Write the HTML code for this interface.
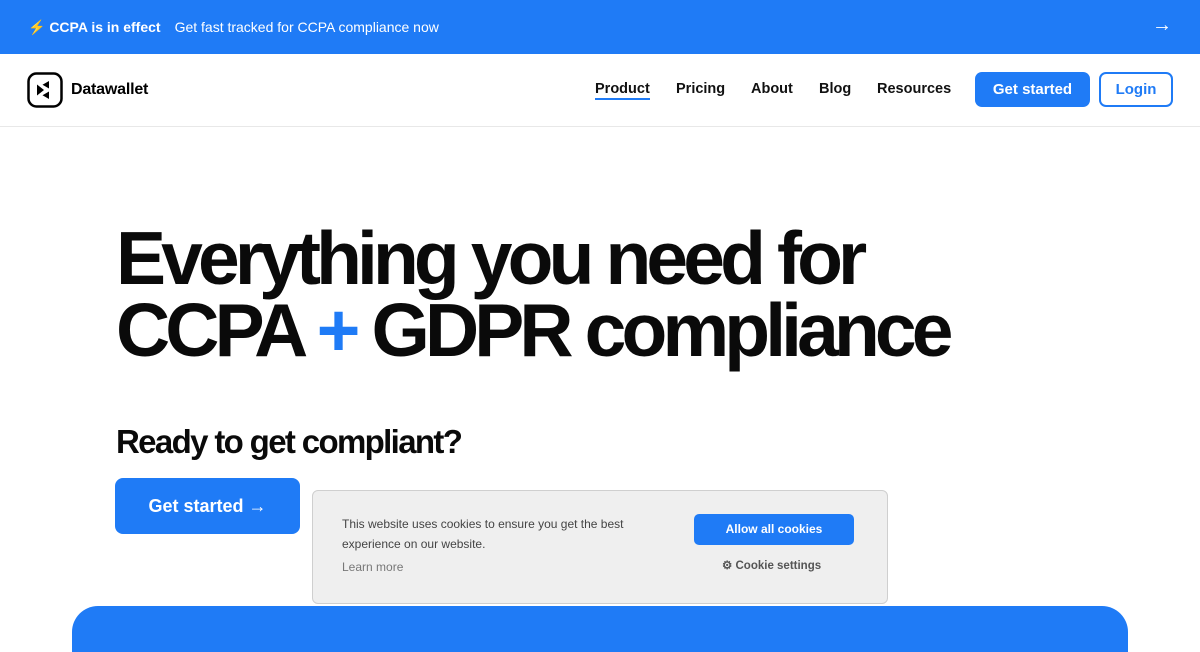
<!DOCTYPE html>
<html><head><meta charset="utf-8"><style>
*{margin:0;padding:0;box-sizing:border-box}
html{overflow:hidden}
body{width:1200px;height:652px;overflow:hidden;background:#fff;font-family:"Liberation Sans",Arial,sans-serif;position:relative}
.top{height:54px;background:#1f7bf6;color:#fff;font-size:14px;display:flex;align-items:center;padding-left:28px;position:relative}
.top b{margin-right:14px}
.top .arr{position:absolute;right:28px;top:14px;font-size:20px}
.nav{height:73px;border-bottom:1px solid #e8e8e8;position:relative}
.nav a{position:absolute;top:27px;font-size:14.5px;font-weight:bold;color:#111;text-decoration:none}
.btn1{position:absolute;left:975px;top:18px;width:115px;height:35px;background:#1f7bf6;border-radius:7px;color:#fff;font-size:15px;font-weight:bold;text-align:center;line-height:35px}
.btn2{position:absolute;left:1099px;top:18px;width:74px;height:35px;border:2px solid #1f7bf6;border-radius:7px;color:#1f7bf6;font-size:15px;font-weight:bold;text-align:center;line-height:31px}
h1{position:absolute;left:116px;top:222px;font-size:75px;line-height:72px;letter-spacing:-0.065em;font-weight:bold;color:#0a0a0a;white-space:nowrap}
h1 span{color:#1f7bf6}
h2{position:absolute;left:116px;top:423px;font-size:33px;letter-spacing:-0.05em;font-weight:bold;color:#0a0a0a}
.gs{position:absolute;left:115px;top:478px;width:185px;height:56px;background:#1f7bf6;border-radius:8px;color:#fff;font-size:18px;font-weight:bold;text-align:center;line-height:56px}
.card{position:absolute;left:72px;top:606px;width:1056px;height:46px;background:#1f7bf6;border-radius:26px 26px 0 0}
.ck{position:absolute;left:312px;top:490px;width:576px;height:114px;background:#efefef;border:1px solid #cfcfcf;border-radius:6px;font-size:12px;color:#444}
.ck p{position:absolute;left:29px;top:23px;width:300px;line-height:20px}
.ck .lm{position:absolute;left:29px;top:69px;color:#777}
.ck .al{position:absolute;left:381px;top:23px;width:160px;height:31px;background:#1f7bf6;border-radius:5px;color:#fff;font-weight:bold;text-align:center;line-height:31px;font-size:12px}
.ck .cs{position:absolute;left:409px;top:67px;font-weight:bold;color:#555;font-size:11.5px}
</style></head><body>
<div class="top"><b>⚡ CCPA is in effect</b><span>Get fast tracked for CCPA compliance now</span><span class="arr">→</span></div>
<div class="nav">
<svg style="position:absolute;left:27px;top:18px" width="36" height="36" viewBox="0 0 36 36"><rect x="1.5" y="1.5" width="33" height="33" rx="8" fill="none" stroke="#000" stroke-width="2.5"/><path d="M10 12.5 L17 18 L10 23.5Z M22 9 L22 16.5 L15.5 12.8Z M22 19.5 L22 27 L15.5 23.2Z" fill="#000"/></svg>
<span style="position:absolute;left:71px;top:27px;font-size:16px;font-weight:bold;letter-spacing:-0.2px">Datawallet</span>
<a style="left:595px;border-bottom:2px solid #1f7bf6;padding-bottom:1px">Product</a>
<a style="left:676px">Pricing</a>
<a style="left:751px">About</a>
<a style="left:819px">Blog</a>
<a style="left:877px">Resources</a>
<div class="btn1">Get started</div><div class="btn2">Login</div>
</div>
<h1>Everything you need for<br>CCPA <span>+</span> GDPR compliance</h1>
<h2>Ready to get compliant?</h2>
<div class="gs">Get started →</div>
<div class="card"></div>
<div class="ck"><p>This website uses cookies to ensure you get the best experience on our website.</p><span class="lm">Learn more</span><div class="al">Allow all cookies</div><span class="cs">⚙ Cookie settings</span></div>
</body></html>
